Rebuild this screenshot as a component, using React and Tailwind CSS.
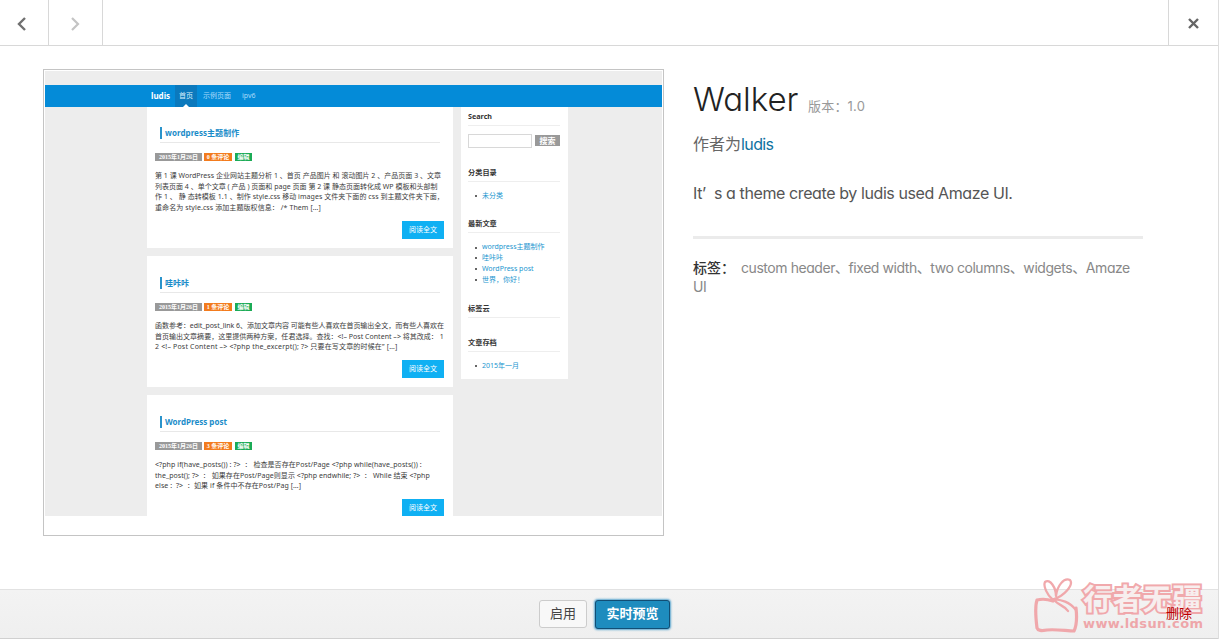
import React from "react";

const latin = "font-[Inter,'Noto_Sans_CJK_SC',sans-serif] [font-feature-settings:'cv11']";
const mini = "font-['Noto_Sans','Noto_Sans_CJK_SC',sans-serif]";

const posts = [
  {
    title: "wordpress主题制作",
    titleClass: "tracking-[0.05px]",
    comments: "0 条评论",
    size: "h-[141px] pt-[20px]",
    lines: [
      ["第 1 课 WordPress 企业网站主题分析 1 、首页 产品图片 和 滚动图片 2 、产品页面 3 、文章", "tracking-[0.02px]"],
      ["列表页面 4 、单个文章 ( 产品 ) 页面和 page 页面 第 2 课 静态页面转化成 WP 模板和头部制", "tracking-[0.01px]"],
      ["作 1 、 静 态转模板 1.1 、制作 style.css 移动 images 文件夹下面的 css 到主题文件夹下面，", "tracking-[0.05px]"],
      ["重命名为 style.css 添加主题版权信息： /* Them […]", "tracking-[0.09px]"],
    ],
  },
  {
    title: "哇咔咔",
    titleClass: "tracking-[0px]",
    comments: "1 条评论",
    size: "h-[131px] pt-[21px]",
    lines: [
      ["函数参考：edit_post_link 6、添加文章内容 可能有些人喜欢在首页输出全文，而有些人喜欢在", "tracking-[-0.03px]"],
      ["首页输出文章摘要，这里提供两种方案，任君选择。查找：<!– Post Content –> 将其改成： 1", "tracking-[0.02px]"],
      ["2 <!– Post Content –> <?php the_excerpt(); ?> 只要在写文章的时候在” […]", "tracking-[0.17px]"],
    ],
  },
  {
    title: "WordPress post",
    titleClass: "tracking-[0px]",
    comments: "3 条评论",
    size: "h-[121px] pt-[21px]",
    lines: [
      ["<?php if(have_posts()) : ?>  ： 检查是否存在Post/Page <?php while(have_posts()) :", "tracking-[0.075px]"],
      ["the_post(); ?>  ： 如果存在Post/Page则显示 <?php endwhile; ?>  ： While 结束 <?php", "tracking-[0.055px]"],
      ["else :  ?>  ：如果 if 条件中不存在Post/Pag […]", "tracking-[0.075px]"],
    ],
  },
];

function Badge({ className, children }) {
  return (
    <span className={`flex h-[8px] items-center justify-center whitespace-nowrap font-['Liberation_Serif','Noto_Sans_CJK_SC',serif] text-[6px] leading-[8px] font-bold text-white ${className}`}>
      {children}
    </span>
  );
}

function Post({ post }) {
  return (
    <article className={`shrink-0 overflow-hidden bg-white ${post.size}`}>
      <div className="mx-[13px] h-[16px] border-b border-[#e8e8e8]">
        <h2 className={`h-[12px] border-l-2 border-[#2a93cb] pl-[3px] text-[8px] leading-[12px] font-bold whitespace-nowrap text-[#1a8cc9] ${post.titleClass}`}>
          {post.title}
        </h2>
      </div>
      <div className="mt-[10px] ml-[8px] flex gap-[2px]">
        <Badge className="w-[47px] bg-[#999]">2015年1月26日</Badge>
        <Badge className="w-[28px] bg-[#f37b1d]">{post.comments}</Badge>
        <Badge className="ml-[1px] w-[17px] bg-[#1bab56]">编辑</Badge>
      </div>
      <div className="mt-[10px] ml-[8px] text-[7px] leading-[10.7px] text-[#3c3c3c]">
        {post.lines.map(([text, tracking]) => (
          <p key={text} className={`w-max whitespace-pre ${tracking}`}>{text}</p>
        ))}
      </div>
      <div className="mt-[7px] mr-[9px] flex justify-end">
        <span className="flex h-[18px] w-[42px] items-center justify-center bg-[#0fb0f3] text-[7px] text-white">阅读全文</span>
      </div>
    </article>
  );
}

function WidgetTitle({ className = "", children }) {
  return (
    <h3 className={`h-[15px] border-b border-[#eee] text-[7.2px] leading-[10px] font-bold text-[#333] ${className}`}>{children}</h3>
  );
}

function WidgetList({ items }) {
  return (
    <ul className="mt-[9px] text-[7px] leading-[10.8px] text-[#1a96cf]">
      {items.map((item) => (
        <li key={item} className="flex items-center whitespace-nowrap">
          <span className="mr-[5px] ml-[7px] size-[2px] rounded-full bg-[#333]" />
          {item}
        </li>
      ))}
    </ul>
  );
}

function ThemeScreenshot() {
  return (
    <div className={`h-[467px] w-[621px] shrink-0 border border-[#c4c4c4] bg-white p-px ${mini} [font-feature-settings:normal]`}>
      <div className="flex h-[445px] w-[617px] flex-col overflow-hidden bg-[#ededed]">
        <nav className="mt-[14px] flex h-[22px] shrink-0 items-stretch bg-[#048bd8] pl-[106px] text-[7px] leading-[22px] text-[#a9dafa]">
          <span className="w-[24px] text-[8px] leading-[21px] font-bold whitespace-nowrap text-white">ludis</span>
          <span className="relative w-[22px] bg-[#0b79bd] text-center text-[#d8effc]">
            首页
            <svg className="absolute bottom-0 left-[8px]" width="6" height="3" viewBox="0 0 6 3"><path d="M0 3L3 0L6 3Z" fill="#fff" /></svg>
          </span>
          <span className="ml-[6px]">示例页面</span>
          <span className="ml-[11px]">ipv6</span>
        </nav>
        <div className="flex gap-[8px] pl-[102px]">
          <main className="flex w-[306px] flex-col gap-[8px]">
            {posts.map((post) => <Post key={post.title} post={post} />)}
          </main>
          <aside className="h-[272px] w-[107px] bg-white pt-[4px] pr-[8px] pl-[7px]">
            <WidgetTitle>Search</WidgetTitle>
            <div className="mt-[8px] flex gap-[3px]">
              <span className="h-[14px] w-[64px] border border-[#d8d8d8]" />
              <span className="mt-[1px] flex h-[11px] w-[25px] items-center justify-center bg-[#999] text-[8px] font-bold text-white">搜索</span>
            </div>
            <WidgetTitle className="mt-[18.5px]">分类目录</WidgetTitle>
            <WidgetList items={["未分类"]} />
            <WidgetTitle className="mt-[17px]">最新文章</WidgetTitle>
            <WidgetList items={["wordpress主题制作", "哇咔咔", "WordPress post", "世界，你好！"]} />
            <WidgetTitle className="mt-[18px]">标签云</WidgetTitle>
            <WidgetTitle className="mt-[18.5px]">文章存档</WidgetTitle>
            <WidgetList items={["2015年一月"]} />
          </aside>
        </div>
      </div>
    </div>
  );
}

function ThemeInfo() {
  return (
    <section className="ml-[29px] w-[450px] text-[#555]">
      <h1 className="mt-[10px] flex h-[40px] items-baseline text-[33px] leading-[40px] font-light text-[#222]">
        <span className="w-[115px] tracking-[0px]">Walker</span>
        <span className="text-[13px] font-normal tracking-[0.2px] text-[#999]">版本：1.0</span>
      </h1>
      <p className="mt-[14px] text-[16px] leading-[22px] text-[#666]">
        作者为<a className="tracking-[-0.6px] text-[#0f729f]">ludis</a>
      </p>
      <p className="mt-[27px] text-[16px] leading-[22px] tracking-[-0.4px] whitespace-nowrap">It’&nbsp; s a theme create by ludis used Amaze UI.</p>
      <hr className="mt-[32px] h-[3px] border-0 bg-[#ebebeb]" />
      <p className="mt-[19px] text-[14px] leading-[19px] text-[#888]">
        <span className="mr-[6px] font-medium text-[#333]">标签：</span>
        <span className="tracking-[-0.44px]">custom header、fixed width、two columns、widgets、Amaze UI</span>
      </p>
    </section>
  );
}

function Watermark() {
  return (
    <div className="absolute right-[15px] bottom-[4px] flex h-[57px] w-[170px] opacity-90">
      <svg className="shrink-0" width="46" height="56" viewBox="0 0 46 56" fill="none" stroke="#f0a0a4" strokeWidth="3.2" strokeLinecap="round" strokeLinejoin="round">
        <path d="M20 24C14 22 8 22 4 23C2 29 3 43 4 51C5 54 8 54 14 53C23 52 34 54 41 54C44 48 44 40 43 31" />
        <path d="M20 23C14 18 10 9 12 5C17 1 23 11 23 19C24 9 31 0 37 3C41 8 31 19 21 22C28 23 36 24 43 33M22 24C27 29 32 29 35 34" strokeWidth="2.3" />
      </svg>
      <div className="ml-[4px] flex flex-col">
        <span className="mt-[3px] h-[35px] whitespace-nowrap font-['Noto_Sans_CJK_SC',sans-serif] text-[29px] leading-[35px] font-bold tracking-[0.8px] text-[#f8eeee] [-webkit-text-stroke:4px_#f0a0a4] [paint-order:stroke_fill]">行者无疆</span>
        <span className="whitespace-nowrap font-['DejaVu_Sans',sans-serif] text-[13px] leading-[18px] font-bold tracking-[0.4px] text-[#ee9fa3]">www.ldsun.com</span>
      </div>
    </div>
  );
}

export default function App() {
  return (
    <div className={`flex h-[639px] w-[1219px] flex-col overflow-hidden border-r border-[#ddd] bg-white ${latin}`}>
      <header className="flex h-[46px] shrink-0 border-b border-[#d8d8d8]">
        <button className="flex w-[49px] items-center border-r border-[#d8d8d8] pl-[16px]">
          <svg className="mt-[2px]" width="12" height="14" viewBox="0 0 12 14" fill="none" stroke="#707070" strokeWidth="2.4"><path d="M9 1L3 7L9 13" /></svg>
        </button>
        <button className="flex w-[54px] items-center border-r border-[#d8d8d8] pl-[21px]">
          <svg className="mt-[2px]" width="12" height="14" viewBox="0 0 12 14" fill="none" stroke="#c4c4c4" strokeWidth="2.2"><path d="M2 1L8 7L2 13" /></svg>
        </button>
        <button className="ml-auto flex w-[50px] items-center justify-center border-l border-[#d8d8d8]">
          <svg className="mt-[3px]" width="12" height="12" viewBox="0 0 12 12" fill="none" stroke="#666" strokeWidth="2.4"><path d="M1 1L10 10M10 1L1 10" /></svg>
        </button>
      </header>
      <div className="flex min-h-0 flex-1 items-start pt-[23px] pl-[43px]">
        <ThemeScreenshot />
        <ThemeInfo />
      </div>
      <footer className="relative flex h-[50px] shrink-0 items-center justify-center gap-[8px] border-t border-b border-t-[#e2e2e2] border-b-[#d0d0d0] bg-linear-to-b from-[#f3f3f3] to-[#efefef] pr-[9px]">
        <button className="h-[28px] w-[48px] rounded-[3px] border border-[#ccc] bg-[#f8f8f8] text-[13px] text-[#444]">启用</button>
        <button className="h-[29px] w-[75px] rounded-[3px] border border-[#124e74] bg-[#1e8cbe] text-[13px] font-bold text-white shadow-[0_0_2px_1px_#5ba6cf]">实时预览</button>
        <Watermark />
        <a className="absolute top-[13px] right-[26px] text-[13px] leading-[20px] text-[#b00]">删除</a>
      </footer>
    </div>
  );
}
